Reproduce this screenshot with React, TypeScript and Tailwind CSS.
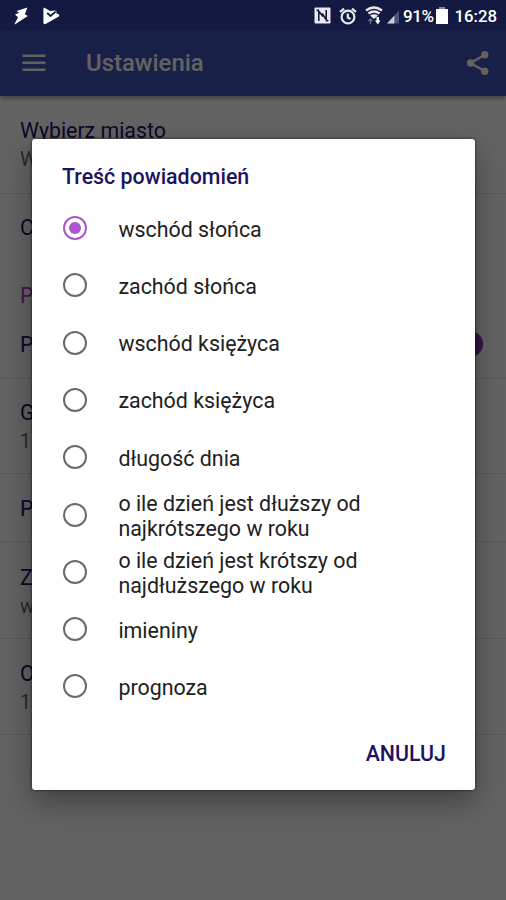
import { useState } from 'react';
import { clsx } from 'clsx';

const OPTIONS = [
    'wschód słońca',
    'zachód słońca',
    'wschód księżyca',
    'zachód księżyca',
    'długość dnia',
    'o ile dzień jest dłuższy od najkrótszego w roku',
    'o ile dzień jest krótszy od najdłuższego w roku',
    'imieniny',
    'prognoza',
];

const StatusBar = () => (
    <div className="relative z-20 h-[30px] bg-[#131940] flex items-center justify-between pl-[14px] pr-[9px] pt-px text-white">
        <div className="flex items-center gap-[13px]">
            {/* Bolt */}
            <svg width="15" height="18" viewBox="0 0 15 18" fill="currentColor">
                <path d="M2.5 4 13.5 0.5 10.8 7.2 13.8 9 0.8 17.5 0.5 17 4 10.2 1 7.5 5 5.8Z" />
            </svg>
            {/* Play mark with a tick */}
            <svg width="18" height="18" viewBox="0 0 18 18" fill="currentColor">
                <path d="M2 0.5 8 4 13 3.5 14.8 4.8 14 6 17 7.6Q17.8 8.6 16.8 9.6L4 16.8Q1.4 18 1.4 15.5V2Q1.4 1 2 0.5Z" />
                <path d="M5.2 6 8.6 9 13.6 4.6" fill="none" stroke="#131940" strokeWidth="1.8" />
            </svg>
        </div>
        <div className="flex items-center">
            {/* NFC */}
            <svg className="mr-[8px]" width="17" height="17" viewBox="0 0 17 17">
                <rect x="0.5" y="0.5" width="16" height="16" rx="1" fill="#e8e8ee" />
                <path d="M4.8 14V4.2L9 9.5M12.2 13V3M8.2 6.5 12 12.5M2.6 3.4H5.2M11.8 13.6H14.4" fill="none" stroke="#131940" strokeWidth="1.6" />
            </svg>
            {/* Alarm */}
            <svg className="mr-[8px]" width="18" height="18" viewBox="0 0 18 18" fill="none" stroke="#e8e8ee" strokeWidth="2.2">
                <circle cx="9" cy="10" r="6.4" />
                <path d="M8.8 6.5V10.5L11.5 12M1 5 5 1.6M17 5 13 1.6" />
            </svg>
            {/* Wi-Fi with transfer arrows */}
            <svg className="mr-[4px]" width="18" height="19" viewBox="0 0 18 19">
                <path d="M1 4.5Q9 -1.5 17 4.5M3.5 7.5Q9 3.5 14.5 7.5" fill="none" stroke="#e8e8ee" strokeWidth="2.3" />
                <path d="M5 9.5Q9 7 13 9.5L9 13Z" fill="#e8e8ee" />
                <path d="M5.5 18V13M3.5 15 5.5 13 7.5 15" fill="none" stroke="#6b7092" strokeWidth="1.3" />
                <path d="M11.5 11H14V14.5H15.5L12.8 18.5 10 14.5H11.5Z" fill="#fff" />
            </svg>
            {/* Signal */}
            <svg className="mr-[4px] mt-[2px]" width="12" height="14" viewBox="0 0 13 14">
                <path d="M0 14 13 0V14Z" fill="#4d5379" />
                <path d="M0 14 8 5.4V14Z" fill="#c9cbd8" />
            </svg>
            <span className="text-[17px] leading-none font-medium tracking-[-0.5px] pt-px">91%</span>
            {/* Battery */}
            <svg className="ml-[3px] mr-[6px]" width="12" height="17" viewBox="0 0 12 17" fill="currentColor">
                <path d="M0 2H12V17H0Z" />
                <path d="M3 0H9V2H3Z" fill="#8588a3" />
            </svg>
            <span className="text-[16.8px] leading-none font-medium pt-px">16:28</span>
        </div>
    </div>
);

const AppBar = () => (
    <div className="relative h-[66px] bg-[#3f51b5] flex items-center pl-[22px] pr-[16px] text-[#f5f5f0] shadow-[0_2px_5px_rgba(0,0,0,0.4)]">
        <svg width="24" height="18" viewBox="0 0 24 18" fill="currentColor">
            <path d="M0.5 0.6H23.5V3.1H0.5ZM0.5 7.6H23.5V10.1H0.5ZM0.5 14.6H23.5V17.1H0.5Z" />
        </svg>
        <h1 className="ml-10 grow text-[23.9px] font-medium pt-px">Ustawienia</h1>
        <svg width="24" height="26" viewBox="0 0 24 26" fill="currentColor">
            <path d="M19 4.8 4.5 13 19 21.2" fill="none" stroke="currentColor" strokeWidth="2.4" />
            <circle cx="18.8" cy="4.8" r="3.7" />
            <circle cx="4.6" cy="13" r="3.7" />
            <circle cx="18.8" cy="21.2" r="3.7" />
        </svg>
    </div>
);

interface PreferenceProps {
    title: string;
    summary?: string;
    className: string;
}

const Preference = ({ title, summary, className }: PreferenceProps) => (
    <div className={clsx('flex flex-col justify-center px-5 text-[21.3px] leading-[29px]', className)}>
        <p>{title}</p>
        {summary && <p className="text-[19.5px] text-[#666]">{summary}</p>}
    </div>
);

const Settings = () => (
    <div className="bg-[#f8f8f8] grow text-[#1e1464]">
        <Preference title="Wybierz miasto" summary="W" className="h-[98px] pt-px border-b border-[#dfdfdf]" />
        <Preference title="C" className="h-[67px]" />
        <Preference title="P" className="h-[67px] pt-px text-[#9a3fc0]" />
        <div className="flex items-center h-[50px] pb-[18px] pr-[23px]">
            <Preference title="P" className="grow" />
            <span className="size-[26px] rounded-full bg-[#8338ae]" />
        </div>
        <Preference title="G" summary="1" className="h-[96px] pt-px border-y border-[#dfdfdf]" />
        <Preference title="P" className="h-[68px] pt-px border-b border-[#dfdfdf]" />
        <Preference title="Z" summary="w" className="h-[97px] pt-[3px] border-b border-[#dfdfdf]" />
        <Preference title="O" summary="1" className="h-[96px] pt-[2px] border-b border-[#dfdfdf]" />
    </div>
);

interface RadioProps {
    label: string;
    checked: boolean;
    onSelect: () => void;
}

const Radio = ({ label, checked, onSelect }: RadioProps) => (
    <button type="button" role="radio" aria-checked={checked} onClick={onSelect} className="flex items-center w-full h-[57.3px] text-left">
        <span className={clsx('size-6 shrink-0 rounded-full border-2 flex items-center justify-center', checked ? 'border-[#ab55cf]' : 'border-[#6a6a6a]')}>
            {checked && <span className="size-3 rounded-full bg-[#ab55cf]" />}
        </span>
        <span className="ml-[31.4px] w-[260px] pt-[2px] text-[21.4px] leading-[25px] text-[#212121]">{label}</span>
    </button>
);

const Dialog = () => {
    const [selected, setSelected] = useState(0);

    return (
        <div role="dialog" className="w-[443px] h-[651px] bg-white rounded-[3px] pl-[31px] pr-[29px] pt-6 flex flex-col shadow-[0_0_3px_rgba(0,0,0,0.7),0_12px_30px_rgba(0,0,0,0.35)]">
            <h2 className="text-[21.4px] leading-[28px] font-medium text-[#1b1464] -ml-px">Treść powiadomień</h2>
            <div role="radiogroup" className="mt-[8.4px]">
                {OPTIONS.map((label, i) => (
                    <Radio key={label} label={label} checked={i === selected} onSelect={() => setSelected(i)} />
                ))}
            </div>
            <div className="flex justify-end mt-[26px]">
                <button type="button" className="text-[21.4px] leading-[26px] font-medium text-[#1b1464]">ANULUJ</button>
            </div>
        </div>
    );
};

export default function App() {
    return (
        <div className="relative w-[506px] h-[900px] overflow-hidden flex flex-col font-[Roboto,sans-serif]">
            <StatusBar />
            <AppBar />
            <Settings />
            {/* Scrim below the status bar, dialog on top of it */}
            <div className="absolute inset-0 z-10 bg-black/60 flex items-start pt-[139px] pl-8">
                <Dialog />
            </div>
        </div>
    );
}
